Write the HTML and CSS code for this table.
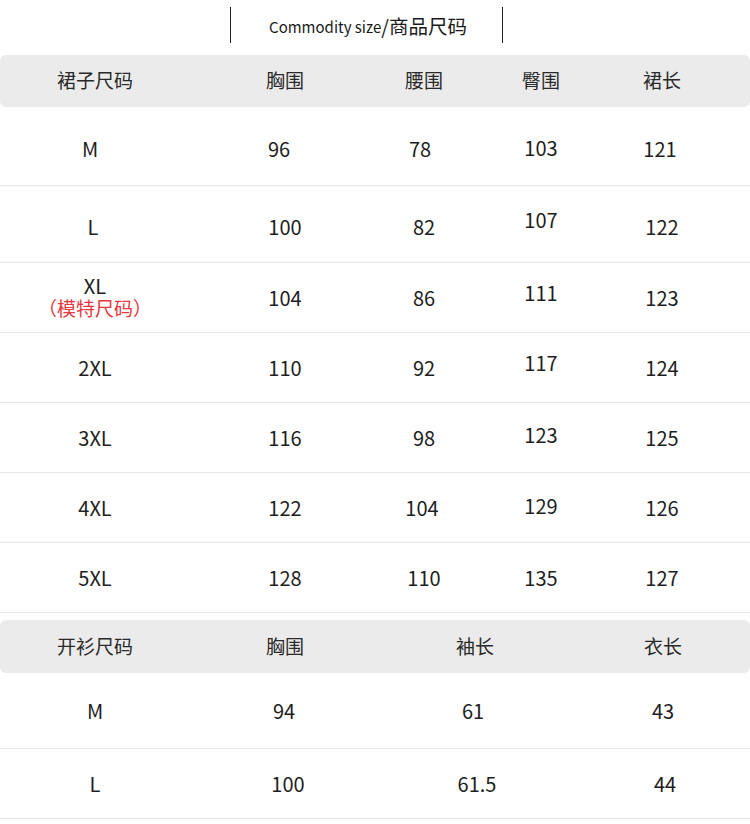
FILE: index.html
```html
<!DOCTYPE html>
<html lang="zh">
<head>
<meta charset="utf-8">
<title>商品尺码</title>
<link rel="stylesheet" href="styles.css">
</head>
<body>
<div class="page">
  <div class="title-wrap">
    <div class="title"><span class="en">Commodity size</span><span class="cn">/商品尺码</span></div>
  </div>

  <div class="band t1">
    <div class="c">裙子尺码</div><div class="c">胸围</div><div class="c">腰围</div><div class="c">臀围</div><div class="c">裙长</div>
  </div>
  <div class="row t1 h79">
    <div class="c dn x-5">M</div><div class="c dn x-6">96</div><div class="c dn x-4">78</div><div class="c dn4">103</div><div class="c dn x-2">121</div>
  </div>
  <div class="row t1 h77">
    <div class="c dn x-2">L</div><div class="c dn">100</div><div class="c dn">82</div><div class="c up6">107</div><div class="c dn">122</div>
  </div>
  <div class="row t1 h70">
    <div class="c xl"><span class="xl-top">XL</span><span class="red">（模特尺码）</span></div><div class="c">104</div><div class="c">86</div><div class="c up5">111</div><div class="c">123</div>
  </div>
  <div class="row t1 h70">
    <div class="c">2XL</div><div class="c">110</div><div class="c">92</div><div class="c up5">117</div><div class="c">124</div>
  </div>
  <div class="row t1 h70">
    <div class="c">3XL</div><div class="c">116</div><div class="c">98</div><div class="c up3">123</div><div class="c">125</div>
  </div>
  <div class="row t1 h70">
    <div class="c">4XL</div><div class="c">122</div><div class="c x-2">104</div><div class="c up2">129</div><div class="c">126</div>
  </div>
  <div class="row t1 h70">
    <div class="c">5XL</div><div class="c">128</div><div class="c">110</div><div class="c">135</div><div class="c">127</div>
  </div>

  <div class="band t2 second">
    <div class="c">开衫尺码</div><div class="c">胸围</div><div class="c">袖长</div><div class="c">衣长</div>
  </div>
  <div class="row t2 h76">
    <div class="c">M</div><div class="c x-1">94</div><div class="c x-2">61</div><div class="c">43</div>
  </div>
  <div class="row t2 h70">
    <div class="c">L</div><div class="c x3">100</div><div class="c x2">61.5</div><div class="c x2">44</div>
  </div>
</div>
</body>
</html>
```

FILE: styles.css
```css
* { box-sizing: border-box; }
html, body { margin: 0; padding: 0; background: #ffffff; }
body {
  font-family: "Noto Sans CJK SC", "Noto Sans", sans-serif;
  color: #1e1e1e;
  width: 750px;
}
.page { width: 750px; }

.title-wrap {
  height: 55px;
  padding-top: 7px;
  display: flex;
  justify-content: center;
}
.title {
  width: 273px;
  height: 36px;
  margin-left: -18px;
  border-left: 1.5px solid #222;
  border-right: 1.5px solid #222;
  display: flex;
  align-items: center;
  justify-content: center;
  padding-left: 4px;
  color: #1a1a1a;
}
.title .en { font-size: 15px; margin-top: 2px; }
.title .cn { font-size: 19.5px; }

.band, .row { display: grid; align-items: center; }
.t1 { grid-template-columns: 190px 190px 88px 146px 96px; }
.t2 { grid-template-columns: 190px 190px 190px 186px; }

.band {
  height: 52px;
  background: #ebebeb;
  border-radius: 6px;
  font-size: 19px;
  color: #2a2a2a;
}
.band .c { padding-bottom: 2px; }
.band.second { margin-top: 7px; height: 53px; }

.row {
  border-bottom: 1px solid #e6e6e6;
  font-size: 20px;
}
.h79 { height: 79px; }
.h77 { height: 77px; }
.h76 { height: 76px; }
.h70 { height: 70px; }

.c {
  text-align: center;
  line-height: 24px;
  white-space: nowrap;
}
.dn { padding-top: 6px; }
.dn4 { padding-top: 4px; }
.up2 { padding-bottom: 4px; }
.up3 { padding-bottom: 6px; }
.up5 { padding-bottom: 10px; }
.up6 { padding-bottom: 8px; }
.x-1 { margin-left: -2px; }
.x-2 { margin-left: -4px; }
.x-4 { margin-left: -8px; }
.x-5 { margin-left: -10px; }
.x-6 { margin-left: -12px; }
.x2 { margin-left: 4px; }
.x3 { margin-left: 6px; }

.xl {
  display: flex;
  flex-direction: column;
  align-items: center;
  padding-top: 1px;
}
.xl-top { line-height: 20px; }
.red { color: #e8383d; font-size: 19px; line-height: 24px; }
```
